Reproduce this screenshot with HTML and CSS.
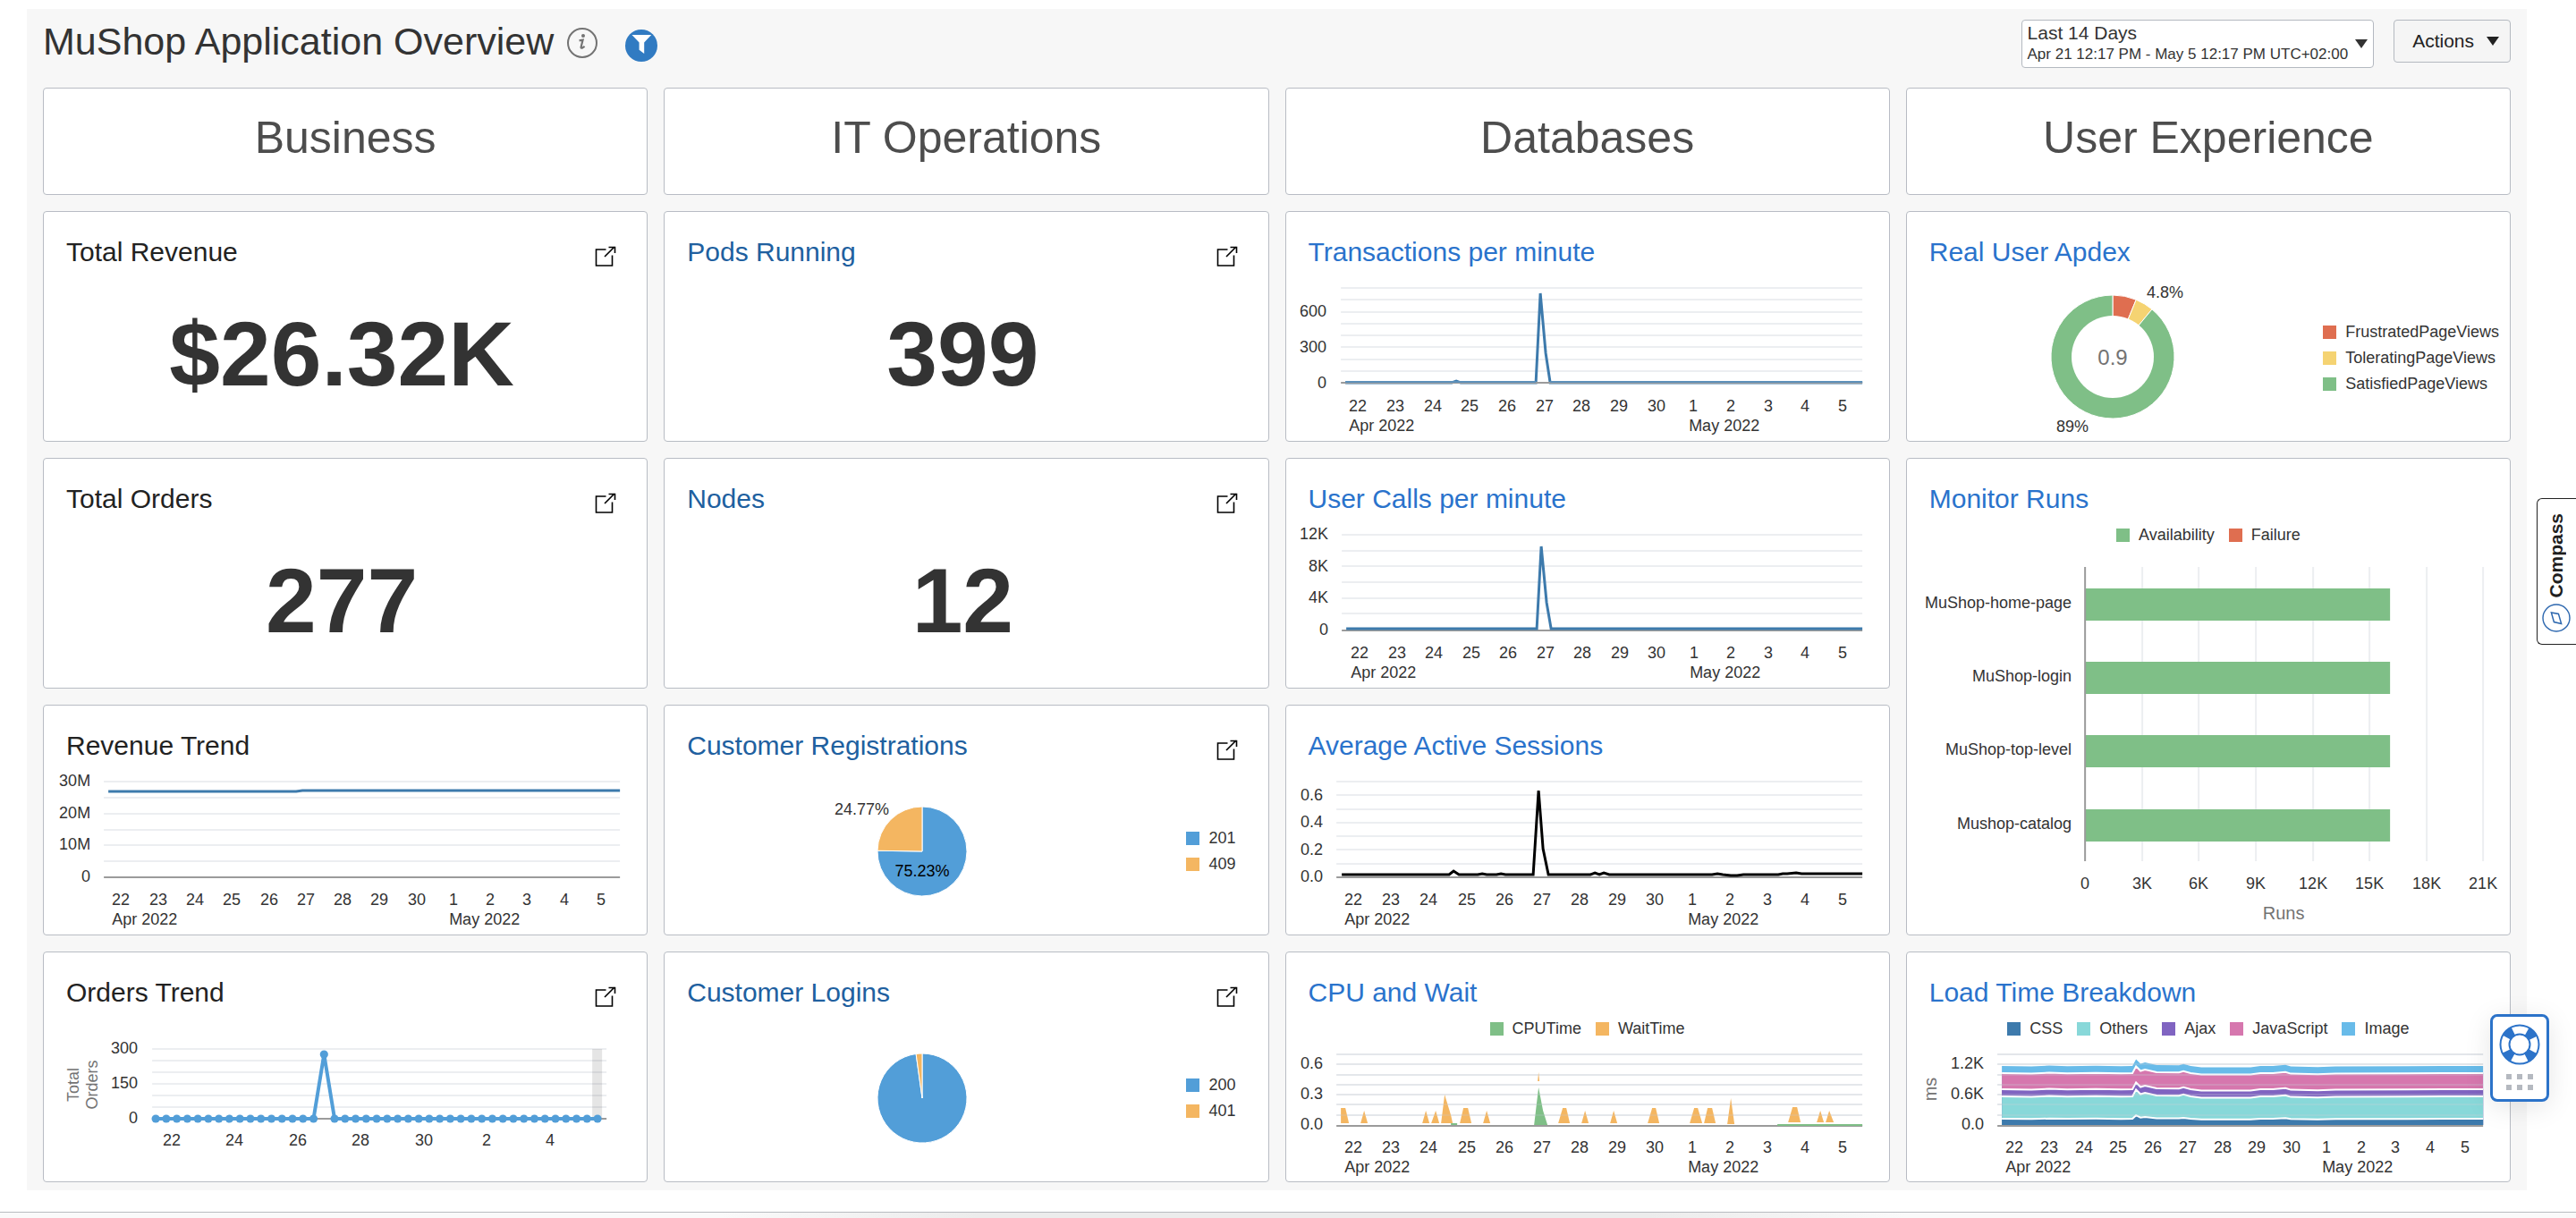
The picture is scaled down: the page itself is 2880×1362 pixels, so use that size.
FILE: index.html
```html
<!DOCTYPE html>
<html lang="en">
<head>
<meta charset="utf-8">
<meta name="viewport" content="width=device-width, initial-scale=1">
<title>MuShop Application Overview</title>
<link rel="stylesheet" href="styles.css">
</head>
<body>
<svg class="sprite" aria-hidden="true">
  <symbol id="icon-open" viewBox="0 0 24 24">
    <path d="M12.5 4H1.5V22H19.5V10.5M11 12L22 1M15.5 1.5H22.5V8" fill="none" stroke="#000" stroke-width="1.6"/>
  </symbol>
</svg>

<main class="dashboard">
  <header class="topbar">
    <h1 class="topbar-title">MuShop Application Overview</h1>
    <button class="icon-button info-button" type="button" aria-label="Dashboard information">
      <svg width="36" height="36" viewBox="0 0 36 36"><circle cx="18" cy="18" r="16" fill="none" stroke="#737373" stroke-width="2"/><circle cx="19" cy="10" r="2" fill="#737373"/><path d="M14.6 15.4L18.6 14.6 16.6 22.6Q16.4 24.2 18 23.6L20.6 21.8" fill="none" stroke="#737373" stroke-width="2.2"/></svg>
    </button>
    <button class="icon-button filter-button" type="button" aria-label="Filter">
      <svg width="36" height="36" viewBox="0 0 36 36"><circle cx="18" cy="18" r="18" fill="#317bc2"/><path d="M7.5 6H29.2L21.2 14.6V27L15.6 22.8V14.6Z" fill="#fff"/></svg>
    </button>
    <div class="topbar-controls">
      <button class="range-button" type="button">
        <span class="range-text"><span class="range-name">Last 14 Days</span><span class="range-detail">Apr 21 12:17 PM - May 5 12:17 PM UTC+02:00</span></span>
        <svg class="caret" width="14" height="10" viewBox="0 0 14 10" aria-hidden="true"><path d="M0 0H14L7 10Z" fill="#333"/></svg>
      </button>
      <button class="actions-button" type="button">Actions
        <svg class="caret" width="14" height="10" viewBox="0 0 14 10" aria-hidden="true"><path d="M0 0H14L7 10Z" fill="#222"/></svg>
      </button>
    </div>
  </header>

  <div class="columns">
    <section class="column">
      <h2 class="card column-head">Business</h2>
      <article class="card">
        <header class="card-head"><h3 class="card-title">Total Revenue</h3><a class="open-link" href="#" aria-label="Open Total Revenue"><svg width="24" height="24"><use href="#icon-open"/></svg></a></header>
        <p class="big-number">$26.32K</p>
      </article>
      <article class="card">
        <header class="card-head"><h3 class="card-title">Total Orders</h3><a class="open-link" href="#" aria-label="Open Total Orders"><svg width="24" height="24"><use href="#icon-open"/></svg></a></header>
        <p class="big-number">277</p>
      </article>
      <article class="card">
        <header class="card-head"><h3 class="card-title">Revenue Trend</h3></header>
        <svg class="chart" id="revenue-trend" viewBox="1 69 674 188" role="img" aria-label="Revenue Trend"></svg>
      </article>
      <article class="card">
        <header class="card-head"><h3 class="card-title">Orders Trend</h3><a class="open-link" href="#" aria-label="Open Orders Trend"><svg width="24" height="24"><use href="#icon-open"/></svg></a></header>
        <svg class="chart" id="orders-trend" viewBox="1 69 674 188" role="img" aria-label="Orders Trend"></svg>
      </article>
    </section>

    <section class="column">
      <h2 class="card column-head">IT Operations</h2>
      <article class="card">
        <header class="card-head"><h3 class="card-title"><a class="deep" href="#">Pods Running</a></h3><a class="open-link" href="#" aria-label="Open Pods Running"><svg width="24" height="24"><use href="#icon-open"/></svg></a></header>
        <p class="big-number">399</p>
      </article>
      <article class="card">
        <header class="card-head"><h3 class="card-title"><a class="deep" href="#">Nodes</a></h3><a class="open-link" href="#" aria-label="Open Nodes"><svg width="24" height="24"><use href="#icon-open"/></svg></a></header>
        <p class="big-number">12</p>
      </article>
      <article class="card">
        <header class="card-head"><h3 class="card-title"><a class="deep" href="#">Customer Registrations</a></h3><a class="open-link" href="#" aria-label="Open Customer Registrations"><svg width="24" height="24"><use href="#icon-open"/></svg></a></header>
        <div class="split">
          <svg class="chart" id="registrations" viewBox="1 69 560 188" preserveAspectRatio="xMinYMid" role="img" aria-label="Customer Registrations"></svg>
          <ul class="legend legend-side wide">
            <li><i class="swatch blue"></i>201</li>
            <li><i class="swatch orange"></i>409</li>
          </ul>
        </div>
      </article>
      <article class="card">
        <header class="card-head"><h3 class="card-title"><a class="deep" href="#">Customer Logins</a></h3><a class="open-link" href="#" aria-label="Open Customer Logins"><svg width="24" height="24"><use href="#icon-open"/></svg></a></header>
        <div class="split">
          <svg class="chart" id="logins" viewBox="1 69 560 188" preserveAspectRatio="xMinYMid" role="img" aria-label="Customer Logins"></svg>
          <ul class="legend legend-side wide">
            <li><i class="swatch blue"></i>200</li>
            <li><i class="swatch orange"></i>401</li>
          </ul>
        </div>
      </article>
    </section>

    <section class="column">
      <h2 class="card column-head">Databases</h2>
      <article class="card">
        <header class="card-head"><h3 class="card-title"><a href="#">Transactions per minute</a></h3></header>
        <svg class="chart" id="transactions" viewBox="1 69 674 188" role="img" aria-label="Transactions per minute"></svg>
      </article>
      <article class="card">
        <header class="card-head"><h3 class="card-title"><a href="#">User Calls per minute</a></h3></header>
        <svg class="chart" id="user-calls" viewBox="1 69 674 188" role="img" aria-label="User Calls per minute"></svg>
      </article>
      <article class="card">
        <header class="card-head"><h3 class="card-title"><a href="#">Average Active Sessions</a></h3></header>
        <svg class="chart" id="sessions" viewBox="1 69 674 188" role="img" aria-label="Average Active Sessions"></svg>
      </article>
      <article class="card">
        <header class="card-head"><h3 class="card-title"><a href="#">CPU and Wait</a></h3></header>
        <ul class="legend legend-top">
          <li><i class="swatch green"></i>CPUTime</li>
          <li><i class="swatch orange"></i>WaitTime</li>
        </ul>
        <svg class="chart chart-short" id="cpu-wait" viewBox="1 103 674 154" role="img" aria-label="CPU and Wait"></svg>
      </article>
    </section>

    <section class="column">
      <h2 class="card column-head">User Experience</h2>
      <article class="card">
        <header class="card-head"><h3 class="card-title"><a href="#">Real User Apdex</a></h3></header>
        <div class="split">
          <svg class="chart" id="apdex" viewBox="1 69 440 188" preserveAspectRatio="xMinYMid" role="img" aria-label="Real User Apdex"></svg>
          <ul class="legend legend-side">
            <li><i class="swatch red"></i>FrustratedPageViews</li>
            <li><i class="swatch yellow"></i>ToleratingPageViews</li>
            <li><i class="swatch green"></i>SatisfiedPageViews</li>
          </ul>
        </div>
      </article>
      <article class="card card-tall">
        <header class="card-head"><h3 class="card-title"><a href="#">Monitor Runs</a></h3></header>
        <ul class="legend legend-top">
          <li><i class="swatch green"></i>Availability</li>
          <li><i class="swatch red"></i>Failure</li>
        </ul>
        <svg class="chart chart-tall" id="monitor-runs" viewBox="1 103 674 430" role="img" aria-label="Monitor Runs"></svg>
      </article>
      <article class="card">
        <header class="card-head"><h3 class="card-title"><a href="#">Load Time Breakdown</a></h3></header>
        <ul class="legend legend-top">
          <li><i class="swatch steel"></i>CSS</li>
          <li><i class="swatch teal"></i>Others</li>
          <li><i class="swatch purple"></i>Ajax</li>
          <li><i class="swatch pink"></i>JavaScript</li>
          <li><i class="swatch sky"></i>Image</li>
        </ul>
        <svg class="chart chart-short" id="load-time" viewBox="1 103 674 154" role="img" aria-label="Load Time Breakdown"></svg>
      </article>
    </section>
  </div>
</main>

<footer class="page-footer"></footer>

<button class="compass-tab" type="button">
  <span class="compass-label">Compass</span>
  <svg width="32" height="32" viewBox="0 0 32 32" aria-hidden="true"><circle cx="16" cy="16" r="15" fill="none" stroke="#2b66ae" stroke-width="1.4"/><path d="M10.4 10L18.4 11.4 21.6 22.4 13.4 20.6Z" fill="none" stroke="#2b66ae" stroke-width="1.5"/></svg>
</button>

<button class="help-widget" type="button" aria-label="Help">
  <svg width="46" height="76" viewBox="0 0 46 76" aria-hidden="true">
    <circle cx="23" cy="23" r="16.5" fill="none" stroke="#fff" stroke-width="11"/>
    <circle cx="23" cy="23" r="16.5" fill="none" stroke="#2c73c9" stroke-width="11" stroke-dasharray="10 15.92" stroke-dashoffset="-7.96"/>
    <circle cx="23" cy="23" r="21.5" fill="none" stroke="#2c73c9" stroke-width="2"/>
    <circle cx="23" cy="23" r="11.5" fill="none" stroke="#2c73c9" stroke-width="2"/>
    <path d="M8 56h6v6h-6zM20 56h6v6h-6zM32 56h6v6h-6zM8 68h6v6h-6zM20 68h6v6h-6zM32 68h6v6h-6z" fill="#b5b9c0"/>
  </svg>
</button>

<script src="charts.js"></script>
</body>
</html>
```
FILE: styles.css
```css
* { box-sizing: border-box; }

body {
  margin: 0;
  background: #fff;
  color: #333;
  font-family: "Liberation Sans", Arial, Helvetica, sans-serif;
  font-size: 18px;
}

h1, h2, h3, p, ul { margin: 0; padding: 0; font-weight: 400; }
ul { list-style: none; }
button { font: inherit; color: inherit; cursor: pointer; }
.sprite { display: none; }

.dashboard {
  margin: 10px 55px 24px 30px;
  padding: 0 18px 9px;
  background: #f7f7f7;
}

/* Top bar */
.topbar {
  display: flex;
  align-items: flex-start;
  height: 88px;
  padding-top: 12px;
}
.topbar-title { font-size: 43px; line-height: 48px; }
.icon-button {
  display: block;
  padding: 0;
  border: 0;
  background: none;
}
.icon-button svg { display: block; }
.info-button { margin: 8px 0 0 14px; }
.filter-button { margin: 11px 0 0 30px; }
.topbar-controls {
  display: flex;
  align-items: flex-start;
  gap: 22px;
  margin-left: auto;
}
.range-button, .actions-button {
  display: flex;
  align-items: center;
  border: 1px solid #b4b9c0;
  border-radius: 4px;
}
.range-button {
  gap: 8px;
  height: 54px;
  padding: 0 6px;
  background: #fff;
  text-align: left;
}
.range-name, .range-detail { display: block; line-height: 24px; }
.range-name { font-size: 21px; }
.range-detail { font-size: 17px; }
.actions-button {
  gap: 14px;
  height: 48px;
  padding: 0 12px 0 20px;
  background: #f5f5f5;
  font-size: 21px;
  color: #222;
}

/* Card grid */
.columns {
  display: grid;
  grid-template-columns: repeat(4, minmax(0, 1fr));
  gap: 18px;
}
.column { display: flex; flex-direction: column; gap: 18px; }
.card {
  height: 258px;
  border: 1px solid #b8bcc4;
  border-radius: 4px;
  background: #fff;
}
.card-tall { height: 534px; }
.column-head {
  display: flex;
  align-items: center;
  justify-content: center;
  height: 120px;
  padding-bottom: 8px;
  font-size: 50px;
  color: #4d4d4d;
}
.card-head {
  display: flex;
  justify-content: space-between;
  height: 68px;
  padding: 27px 34px 0 25px;
}
.card-title { font-size: 30px; line-height: 36px; color: #222; }
.card-title a { color: #2a73cc; text-decoration: none; }
.card-title .deep { color: #20609f; }
.open-link { display: block; padding-top: 11px; }
.open-link svg { display: block; }
.big-number {
  display: flex;
  align-items: center;
  justify-content: center;
  height: 188px;
  padding: 0 8px 6px 0;
  font-size: 102px;
  font-weight: 700;
}

/* Legends */
.legend li { display: flex; align-items: center; gap: 10px; }
.legend-top {
  display: flex;
  justify-content: center;
  gap: 16px;
  height: 34px;
  line-height: 34px;
}
.legend-side {
  display: flex;
  flex: none;
  flex-direction: column;
  justify-content: center;
  gap: 8px;
  padding: 2px 12px 0 0;
  line-height: 21px;
}
.legend-side.wide { padding-right: 36px; }
.swatch { width: 15px; height: 15px; }
.blue { background: #529ed8; }
.orange { background: #f4b661; }
.green { background: #7fbf87; }
.red { background: #df6e50; }
.yellow { background: #f5d372; }
.steel { background: #3d7aac; }
.teal { background: #88d8d9; }
.purple { background: #8064c1; }
.pink { background: #d677ae; }
.sky { background: #68bbe9; }

/* Charts */
.split { display: flex; }
.split .chart { flex: 1; min-width: 0; }
.chart { display: block; width: 100%; height: 188px; }
.chart-short { height: 154px; }
.chart-tall { height: 430px; }
.chart text { font-size: 18px; fill: #333; }
.chart .axis-title { fill: #737373; }
.chart .axis-title-large { font-size: 20px; fill: #737373; }
.chart .center-value { font-size: 24px; fill: #737373; }
.chart .on-slice { fill: #000; }
.end { text-anchor: end; }
.middle { text-anchor: middle; }

/* Footer strip */
.page-footer {
  height: 7px;
  border-top: 1px solid #b8bbc0;
  background: linear-gradient(90deg, #fafafa 28%, #ececec 38%, #ececec 64%, #fafafa 74%);
}

/* Floating controls */
.compass-tab {
  position: fixed;
  top: 557px;
  right: 0;
  display: flex;
  flex-direction: column;
  align-items: center;
  gap: 6px;
  padding: 16px 6px 13px 5px;
  border: 1px solid #222;
  border-right: 0;
  border-radius: 6px 0 0 6px;
  background: #fff;
}
.compass-tab svg { display: block; }
.compass-label {
  writing-mode: vertical-rl;
  transform: rotate(180deg);
  font-size: 21px;
  font-weight: 700;
  color: #1f1f1f;
}
.help-widget {
  position: fixed;
  top: 1134px;
  right: 30px;
  padding: 8px 7px;
  border: 3px solid #2c73c9;
  border-radius: 8px;
  background: #fff;
  box-shadow: 0 6px 30px rgba(0, 0, 0, 0.1);
}
.help-widget svg { display: block; }
```
FILE: charts.js
```js
const NS = 'http://www.w3.org/2000/svg';
const DAYS = [22, 23, 24, 25, 26, 27, 28, 29, 30, 1, 2, 3, 4, 5];
const GRID = '#eceef1';
const AXIS = '#9b9b9b';

function add(svg, tag, attrs, text) {
  const el = document.createElementNS(NS, tag);
  for (const key in attrs) el.setAttribute(key, attrs[key]);
  if (text !== undefined) el.textContent = text;
  svg.appendChild(el);
  return el;
}

function line(svg, x1, y1, x2, y2, color) {
  add(svg, 'line', { x1, y1, x2, y2, stroke: color, 'stroke-width': 2 });
}

// Horizontal grid lines, evenly spaced between top and base.
function grid(svg, o, color) {
  for (let i = 0; i < o.rows; i++) {
    const y = Math.round(o.top + (o.base - o.top) * i / o.rows);
    line(svg, o.left, y, o.right, y, color || GRID);
  }
}

function valueLabels(svg, x, labels) {
  labels.forEach(([text, y]) => add(svg, 'text', { x, y: y + 5, class: 'end' }, text));
}

// Day numbers with the month named under its first day.
function dayLabels(svg, first, last, y) {
  const step = (last - first) / 13;
  DAYS.forEach((d, i) => add(svg, 'text', { x: Math.round(first + step * i), y, class: 'middle' }, d));
  add(svg, 'text', { x: Math.round(first - 10), y: y + 22 }, 'Apr 2022');
  add(svg, 'text', { x: Math.round(first + step * 9 - 5), y: y + 22 }, 'May 2022');
}

function polyline(svg, points, color, width) {
  add(svg, 'polyline', { points: points.join(' '), fill: 'none', stroke: color, 'stroke-width': width });
}

function slice(svg, cx, cy, r, from, to, color) {
  const at = t => [cx + r * Math.sin(2 * Math.PI * t), cy - r * Math.cos(2 * Math.PI * t)];
  add(svg, 'path', {
    d: `M${cx} ${cy}L${at(from)}A${r} ${r} 0 ${to - from > 0.5 ? 1 : 0} 1 ${at(to)}Z`,
    fill: color, stroke: '#fff', 'stroke-width': 1
  });
}

const $ = id => document.getElementById(id);

{ // Revenue Trend
  const s = $('revenue-trend');
  grid(s, { left: 68, right: 645, top: 86, base: 193, rows: 6 });
  line(s, 68, 193, 645, 193, AXIS);
  polyline(s, [[73, 97], [283, 97], [290, 96], [645, 96]], '#3d7aac', 3);
  valueLabels(s, 53, [['30M', 86], ['20M', 122], ['10M', 157], ['0', 193]]);
  dayLabels(s, 87.4, 624, 224);
}

{ // Orders Trend
  const s = $('orders-trend');
  grid(s, { left: 122, right: 630, top: 109, base: 187, rows: 6 });
  add(s, 'rect', { x: 614, y: 109, width: 11, height: 78, fill: '#000', opacity: 0.1 });
  line(s, 122, 187, 630, 187, AXIS);
  const pts = Array.from({ length: 43 }, (_, i) => [126 + i * 11.76, i === 16 ? 115 : 187]);
  polyline(s, pts, '#529ed8', 4);
  pts.forEach(([cx, cy]) => add(s, 'circle', { cx, cy, r: 4.6, fill: '#529ed8' }));
  valueLabels(s, 106, [['300', 109], ['150', 148], ['0', 187]]);
  [22, 24, 26, 28, 30, 2, 4].forEach((d, i) => add(s, 'text', { x: Math.round(143.6 + i * 70.5), y: 217, class: 'middle' }, d));
  add(s, 'text', { transform: 'translate(40 149) rotate(-90)', class: 'axis-title middle' }, 'Total');
  add(s, 'text', { transform: 'translate(61 149) rotate(-90)', class: 'axis-title middle' }, 'Orders');
}

{ // Customer Registrations
  const s = $('registrations');
  slice(s, 289, 164, 50, 0, 0.7523, '#529ed8');
  slice(s, 289, 164, 50, 0.7523, 1, '#f4b661');
  add(s, 'text', { x: 252, y: 123, class: 'end' }, '24.77%');
  add(s, 'text', { x: 289, y: 192, class: 'middle on-slice' }, '75.23%');
}

{ // Customer Logins
  const s = $('logins');
  slice(s, 289, 164, 50, 0, 0.978, '#529ed8');
  slice(s, 289, 164, 50, 0.978, 1, '#f4b661');
}

{ // Transactions per minute
  const s = $('transactions');
  grid(s, { left: 62, right: 645, top: 86, base: 192, rows: 8 });
  polyline(s, [[67, 192], [186, 192], [191, 190], [196, 192], [280, 192], [285, 92], [291, 159], [296, 192], [645, 192]], '#3d7aac', 3);
  line(s, 62, 192, 645, 192, AXIS);
  line(s, 67, 191, 280, 191, '#5c90ba');
  line(s, 296, 191, 645, 191, '#5c90ba');
  valueLabels(s, 46, [['600', 113], ['300', 153], ['0', 193]]);
  dayLabels(s, 81.4, 623, 224);
}

{ // User Calls per minute
  const s = $('user-calls');
  grid(s, { left: 63, right: 645, top: 86, base: 192, rows: 6 });
  line(s, 63, 193, 645, 193, AXIS);
  polyline(s, [[68, 191], [281, 191], [286, 99], [292, 162], [297, 191], [645, 191]], '#3d7aac', 3);
  valueLabels(s, 48, [['12K', 86], ['8K', 122], ['4K', 157], ['0', 193]]);
  dayLabels(s, 83, 623, 224);
}

{ // Average Active Sessions
  const s = $('sessions');
  grid(s, { left: 57, right: 645, top: 86, base: 193, rows: 7 });
  line(s, 57, 193, 645, 193, AXIS);
  polyline(s, [[63, 190], [183, 190], [188, 186], [194, 190], [215, 190], [220, 189], [225, 190], [236, 190], [241, 189],
    [246, 190], [277, 190], [283, 96], [288, 161], [294, 190], [341, 190], [346, 188], [351, 190], [356, 188], [362, 190],
    [477, 190], [483, 189], [489, 190], [498, 191], [505, 191], [512, 190], [551, 190], [556, 189], [561, 189], [571, 188],
    [577, 189], [645, 189]], '#000', 3);
  valueLabels(s, 42, [['0.6', 102], ['0.4', 132], ['0.2', 163], ['0.0', 193]]);
  dayLabels(s, 76.4, 623, 224);
}

{ // CPU and Wait
  const s = $('cpu-wait');
  const area = { left: 57, right: 645, top: 115, base: 194, rows: 7 };
  grid(s, area);
  const wait = [
    [62, 192, 62, 175, 67, 175, 71, 192], [84, 192, 88, 178, 92, 192], [153, 192, 157, 178, 161, 192],
    [163, 192, 168, 178, 172, 192], [174, 192, 178, 160, 185, 183, 187, 192], [195, 192, 199, 175, 204, 175, 208, 192],
    [221, 192, 225, 178, 229, 192], [305, 192, 310, 175, 314, 175, 318, 192], [331, 192, 335, 178, 339, 192],
    [363, 192, 367, 178, 371, 192], [405, 192, 410, 175, 414, 175, 418, 192], [452, 192, 457, 175, 461, 175, 466, 192],
    [468, 192, 472, 175, 477, 175, 481, 192], [494, 193, 498, 164, 502, 193], [562, 191, 567, 174, 572, 174, 576, 191],
    [594, 191, 598, 178, 602, 191], [604, 191, 608, 178, 613, 191], [282, 145, 283, 135, 284, 145]
  ];
  wait.forEach(p => add(s, 'polygon', { points: p.join(' '), fill: '#f4b661' }));
  add(s, 'polygon', { points: '278,194 283,152 288,178 293,194', fill: '#7fbf87' });
  line(s, 57, 195, 645, 195, AXIS);
  line(s, 185, 193, 192, 193, '#7fbf87');
  line(s, 550, 194, 645, 194, '#7fbf87');
  grid(s, area, 'rgba(200,206,216,0.2)');
  valueLabels(s, 42, [['0.6', 126], ['0.3', 160], ['0.0', 194]]);
  dayLabels(s, 76.4, 623, 225);
}

{ // Real User Apdex
  const s = $('apdex');
  slice(s, 231, 163, 69, 0, 0.062, '#df6e50');
  slice(s, 231, 163, 69, 0.062, 0.11, '#f5d372');
  slice(s, 231, 163, 69, 0.11, 1, '#7fbf87');
  add(s, 'circle', { cx: 231, cy: 163, r: 46, fill: '#fff' });
  add(s, 'text', { x: 231, y: 172, class: 'center-value middle' }, '0.9');
  add(s, 'text', { x: 269, y: 97 }, '4.8%');
  add(s, 'text', { x: 168, y: 247 }, '89%');
}

{ // Monitor Runs
  const s = $('monitor-runs');
  ['0', '3K', '6K', '9K', '12K', '15K', '18K', '21K'].forEach((label, i) => {
    const x = Math.round(200 + i * 63.64);
    if (i) line(s, x, 122, x, 451, GRID);
    add(s, 'text', { x, y: 482, class: 'middle' }, label);
  });
  ['MuShop-home-page', 'MuShop-login', 'MuShop-top-level', 'Mushop-catalog'].forEach((label, i) => {
    const y = Math.round(146 + i * 82.2);
    add(s, 'rect', { x: 200, y, width: 341, height: 36, fill: '#7fbf87' });
    add(s, 'text', { x: 185, y: y + 22, class: 'end' }, label);
  });
  line(s, 200, 122, 200, 451, AXIS);
  add(s, 'text', { x: 422, y: 516, class: 'axis-title-large middle' }, 'Runs');
}

{ // Load Time Breakdown
  const s = $('load-time');
  const area = { left: 102, right: 645, top: 115, base: 194, rows: 7 };
  grid(s, area);
  // Shared wobble of all the series: x and its offset from the layer's level.
  const wave = [[107, 0], [140, 0.4], [160, -0.4], [180, 0.2], [212, -0.3], [240, 0.3], [253, 0], [257, -7.6], [262, -2.5], [267, -4],
    [280, -1], [305, -0.8], [310, -2.2], [318, 0], [330, 1.5], [385, 1.4], [396, 0], [410, 0], [424, -1.3], [430, 0.6], [460, 1.3],
    [480, 0.4], [560, 0.3], [600, 0], [645, 0]];
  [['#68bbe9', 128, 1], ['#d677ae', 136, 1], ['#8064c1', 154, 1], ['#88d8d9', 162, 1], ['#3d7aac', 187, 0.5]].forEach(([fill, level, k], i) => {
    const top = wave.map(([x, d]) => [x, level + d * k]);
    add(s, 'polygon', { points: [[107, 194], ...top, [645, 194]].join(' '), fill });
    if (i) polyline(s, top, '#fff', 2);
  });
  grid(s, area, 'rgba(200,206,216,0.25)');
  line(s, 102, 195, 645, 195, AXIS);
  valueLabels(s, 87, [['1.2K', 126], ['0.6K', 160], ['0.0', 194]]);
  dayLabels(s, 121, 625, 225);
  add(s, 'text', { transform: 'translate(34 154) rotate(-90)', class: 'axis-title-large middle' }, 'ms');
}
```
